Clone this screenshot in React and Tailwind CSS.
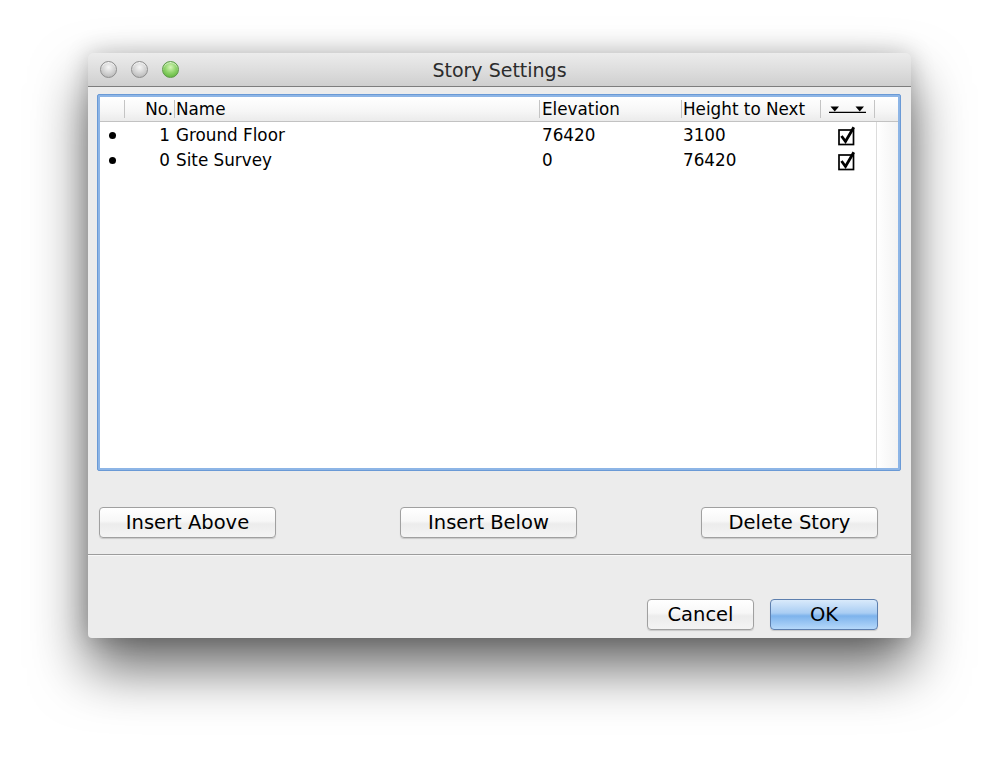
import React from "react";

const font = { fontFamily: '"DejaVu Sans", "Lucida Grande", sans-serif' };

function Light({ green }) {
  return (
    <div
      className={
        green
          ? "w-[17px] h-[17px] rounded-full border border-[#5c9a45] bg-[radial-gradient(circle_at_50%_35%,#d6f5b8_0%,#8fd46a_45%,#4fa92c_100%)] shadow-[inset_0_1px_1px_rgba(255,255,255,0.7)]"
          : "w-[17px] h-[17px] rounded-full border border-[#8e8e8e] bg-[radial-gradient(circle_at_50%_35%,#f6f6f6_0%,#d2d2d2_50%,#acacac_100%)] shadow-[inset_0_1px_1px_rgba(255,255,255,0.8)]"
      }
    />
  );
}

function Check() {
  return (
    <svg width="19" height="20" viewBox="0 0 19 20">
      <rect x="1" y="4" width="14.5" height="14.5" fill="white" stroke="black" strokeWidth="1.7" />
      <path d="M3.5 10 L7.5 15.5 L15.8 1.2" fill="none" stroke="black" strokeWidth="2.8" strokeLinejoin="miter" />
    </svg>
  );
}

function HeaderIcon() {
  return (
    <svg width="40" height="9" viewBox="0 0 40 9">
      <path d="M2.5 1.5 L11 1.5 L6.75 6.5 Z" fill="black" />
      <path d="M27.5 1.5 L36 1.5 L31.75 6.5 Z" fill="black" />
      <line x1="1" y1="7.3" x2="38" y2="7.3" stroke="black" strokeWidth="1.3" />
    </svg>
  );
}

function Sep() {
  return <div className="w-px self-stretch my-[3px] bg-[#c4c4c4]" />;
}

function Button({ children, w, primary }) {
  return (
    <div
      className={
        (primary
          ? "border-[#5d7fae] bg-[linear-gradient(#d9eafb_0%,#a9cdf3_45%,#7db3ec_55%,#b5d8fa_100%)] "
          : "border-[#a0a0a0] bg-[linear-gradient(#ffffff_0%,#f7f7f7_45%,#ececec_55%,#f4f4f4_100%)] ") +
        "h-[31px] rounded-[4px] border flex items-center justify-center text-[19.5px] text-black shadow-[0_1px_1px_rgba(0,0,0,0.15)] " +
        w
      }
    >
      {children}
    </div>
  );
}

const rows = [
  { no: "1", name: "Ground Floor", elev: "76420", h: "3100" },
  { no: "0", name: "Site Survey", elev: "0", h: "76420" },
];

export default function App() {
  return (
    <div className="w-[999px] h-[760px] bg-white pt-[53px] pl-[88px]" style={font}>
      <div className="w-[823px] h-[585px] flex flex-col bg-[#ececec] rounded-t-[6px] rounded-b-[4px] shadow-[0_30px_55px_rgba(0,0,0,0.6),0_0_24px_rgba(0,0,0,0.2)] overflow-hidden">
        {/* title bar */}
        <div className="h-[34px] shrink-0 flex items-center pl-[12px] bg-[linear-gradient(#ececec_0%,#dedede_50%,#cfcfcf_100%)] border-b border-[#7d7d7d] relative">
          <div className="flex gap-[14px]">
            <Light />
            <Light />
            <Light green />
          </div>
          <div className="absolute left-0 right-0 top-[2px] bottom-0 flex items-center justify-center text-[19px] text-[#2c2c2c] pointer-events-none">
            Story Settings
          </div>
        </div>

        {/* table */}
        <div className="mt-[7px] ml-[9px] w-[804px] h-[377px] shrink-0 p-[2px] rounded-[2px] bg-[#8db5e6] border border-[#6a9ad6]">
          <div className="w-full h-full bg-white flex flex-col text-[16.8px] text-black">
            <div className="h-[25px] shrink-0 flex items-stretch bg-[linear-gradient(#ffffff_0%,#f6f6f6_60%,#ebebeb_100%)] border-b border-[#c2c2c2] leading-none">
              <div className="w-[24px]" />
              <Sep />
              <div className="w-[49px] flex items-center justify-end pr-[1px]">No.</div>
              <Sep />
              <div className="w-[364px] flex items-center pl-[1px]">Name</div>
              <Sep />
              <div className="w-[141px] flex items-center pl-[2px]">Elevation</div>
              <Sep />
              <div className="w-[138px] flex items-center pl-[1px]">Height to Next</div>
              <Sep />
              <div className="w-[53px] flex items-center justify-center">
                <HeaderIcon />
              </div>
              <Sep />
              <div className="flex-1" />
            </div>
            <div className="flex-1 flex">
              <div className="w-[776px] flex flex-col pt-[1px]">
                {rows.map((r) => (
                  <div key={r.no} className="h-[25px] flex items-center leading-none">
                    <div className="w-[24px] flex justify-center">
                      <div className="w-[7px] h-[7px] rounded-full bg-black" />
                    </div>
                    <div className="w-[50px] text-right pr-[4px]">{r.no}</div>
                    <div className="w-[365px] pl-[2px]">{r.name}</div>
                    <div className="w-[142px] pl-[3px]">{r.elev}</div>
                    <div className="w-[139px] pl-[2px]">{r.h}</div>
                    <div className="w-[54px] flex justify-center pt-[1px]">
                      <Check />
                    </div>
                  </div>
                ))}
              </div>
              <div className="flex-1 border-l border-[#dcdcdc] bg-[linear-gradient(90deg,#ffffff,#f3f3f3)]" />
            </div>
          </div>
        </div>

        {/* action buttons */}
        <div className="mt-[36px] pl-[11px] pr-[33px] flex justify-between">
          <Button w="w-[177px]">Insert Above</Button>
          <Button w="w-[177px]">Insert Below</Button>
          <Button w="w-[177px]">Delete Story</Button>
        </div>

        <div className="mt-[16px] h-px bg-[#9c9c9c]" />
        <div className="h-px bg-[#f8f8f8]" />

        <div className="flex-1 flex items-end justify-end pr-[33px] pb-[8px] gap-[16px]">
          <Button w="w-[107px]">Cancel</Button>
          <Button w="w-[108px]" primary>
            OK
          </Button>
        </div>
      </div>
    </div>
  );
}
